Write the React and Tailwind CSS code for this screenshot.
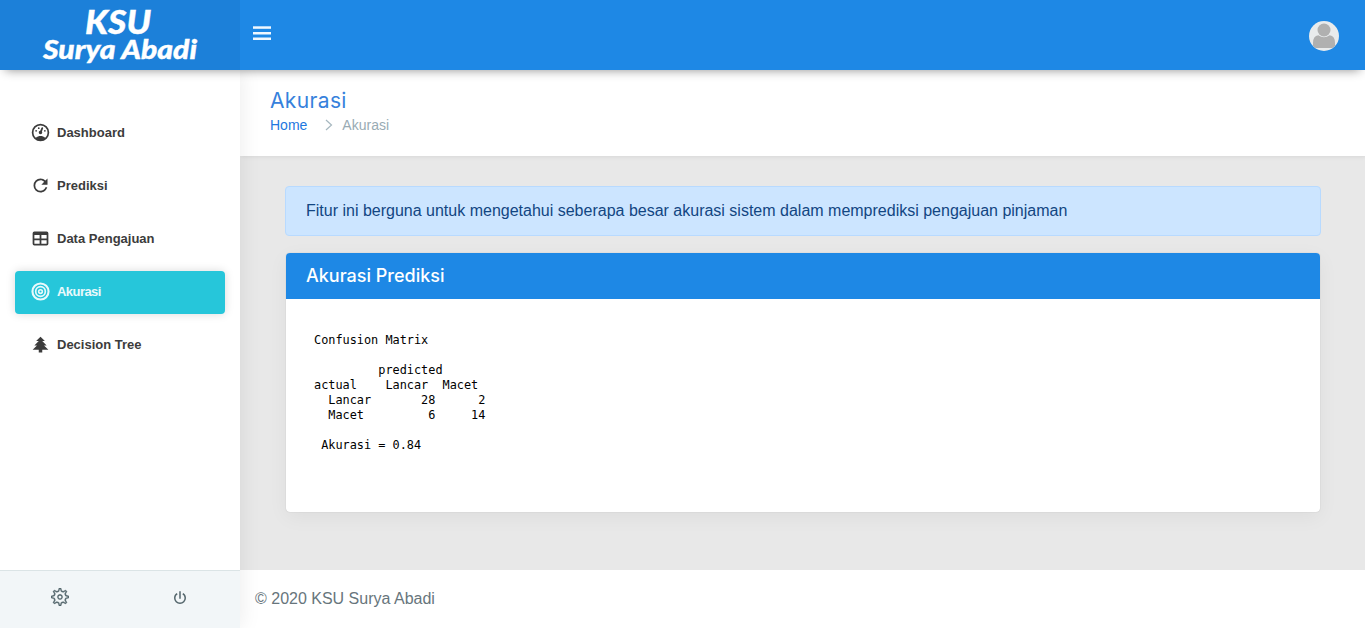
import React from "react";
import { TfiSettings } from "react-icons/tfi";

const paths = {
  gauge:
    "M17.3,18C19,16.5 20,14.4 20,12A8,8 0 0,0 12,4A8,8 0 0,0 4,12C4,14.4 5,16.5 6.7,18C8.2,16.7 10,16 12,16C14,16 15.9,16.7 17.3,18M12,2A10,10 0 0,1 22,12A10,10 0 0,1 12,22A10,10 0 0,1 2,12A10,10 0 0,1 12,2M7,9A1,1 0 0,1 8,10A1,1 0 0,1 7,11A1,1 0 0,1 6,10A1,1 0 0,1 7,9M10,6A1,1 0 0,1 11,7A1,1 0 0,1 10,8A1,1 0 0,1 9,7A1,1 0 0,1 10,6M17,9A1,1 0 0,1 18,10A1,1 0 0,1 17,11A1,1 0 0,1 16,10A1,1 0 0,1 17,9M14.4,6.1C14.9,6.3 15.1,6.9 15,7.4L13.6,10.8C13.8,11.1 14,11.5 14,12A2,2 0 0,1 12,14A2,2 0 0,1 10,12C10,11 10.7,10.1 11.7,10L13.1,6.7C13.3,6.1 13.9,5.9 14.4,6.1Z",
  refresh:
    "M17.65,6.35C16.2,4.9 14.21,4 12,4A8,8 0 0,0 4,12A8,8 0 0,0 12,20C15.73,20 18.84,17.45 19.73,14H17.65C16.83,16.33 14.61,18 12,18A6,6 0 0,1 6,12A6,6 0 0,1 12,6C13.66,6 15.14,6.69 16.22,7.78L13,11H20V4L17.65,6.35Z",
  table:
    "M5,4H19A2,2 0 0,1 21,6V18A2,2 0 0,1 19,20H5A2,2 0 0,1 3,18V6A2,2 0 0,1 5,4M5,8V12H11V8H5M13,8V12H19V8H13M5,14V18H11V14H5M13,14V18H19V14H13Z",
  tree: "M10,21V18H3L8,13H5L10,8H7L12,3L17,8H14L19,13H16L21,18H14V21H10Z",
  power:
    "M16.56,5.44L15.11,6.89C16.84,7.94 18,9.83 18,12A6,6 0 0,1 12,18A6,6 0 0,1 6,12C6,9.83 7.16,7.94 8.88,6.88L7.44,5.44C5.36,6.88 4,9.28 4,12A8,8 0 0,0 12,20A8,8 0 0,0 20,12C20,9.28 18.64,6.88 16.56,5.44M13,3H11V13H13",
};

function Icon({ name, className }) {
  if (name === "target") {
    return (
      <svg viewBox="0 0 24 24" className={className} fill="none" stroke="currentColor">
        <circle cx="12" cy="12" r="9.2" strokeWidth="2.4" />
        <circle cx="12" cy="12" r="5.5" strokeWidth="1.9" />
        <circle cx="12" cy="12" r="2.1" strokeWidth="1.8" />
      </svg>
    );
  }
  return (
    <svg viewBox="0 0 24 24" className={className} fill="currentColor">
      <path d={paths[name]} />
    </svg>
  );
}

const items = [
  { label: "Dashboard", icon: "gauge" },
  { label: "Prediksi", icon: "refresh" },
  { label: "Data Pengajuan", icon: "table" },
  { label: "Akurasi", icon: "target", active: true },
  { label: "Decision Tree", icon: "tree" },
];

const output = `Confusion Matrix

         predicted
actual    Lancar  Macet
  Lancar       28      2
  Macet         6     14

 Akurasi = 0.84`;

function Logo() {
  return (
    <svg className="h-[70px] w-60" viewBox="0 0 240 70" fill="#fff" stroke="#fff" strokeWidth="0.4" fontFamily="Lato, sans-serif" fontWeight="900" fontStyle="italic">
      <text x="85" y="33.5" fontSize="32" textLength="66" lengthAdjust="spacingAndGlyphs">KSU</text>
      <text x="43" y="59" fontSize="27" textLength="154" lengthAdjust="spacingAndGlyphs">Surya Abadi</text>
    </svg>
  );
}

function Sidebar() {
  return (
    <aside className="z-10 flex w-60 shrink-0 flex-col bg-white shadow-[1px_0_20px_rgba(0,0,0,0.08)]">
      <nav className="flex grow flex-col gap-2.5 px-[15px] pt-[42px]">
        {items.map((item) => (
          <a
            key={item.label}
            className={
              item.active
                ? "flex h-[43px] items-center rounded bg-[#26c6da] pl-[15px] text-[13px] font-bold tracking-[-0.55px] text-white/90 shadow-[0_0_10px_rgba(0,0,0,0.15)]"
                : "flex h-[43px] items-center rounded pl-[15px] text-[13px] font-bold text-[#3c3c3c]"
            }
          >
            <Icon name={item.icon} className="mb-[2px] mr-[6px] size-[21px]" />
            <span className="-mt-0.5">{item.label}</span>
          </a>
        ))}
      </nav>
      <div className="flex h-[58px] border-t border-[#dbe4e6] bg-[#f2f6f8] text-[#54666c]">
        <div className="flex w-1/2 items-center justify-center pb-[5px]">
          <TfiSettings className="size-[18px]" strokeWidth="0.3" />
        </div>
        <div className="flex w-1/2 items-center justify-center pb-[3px]">
          <Icon name="power" className="size-[18px]" />
        </div>
      </div>
    </aside>
  );
}

export default function App() {
  return (
    <div className="flex h-[628px] w-[1365px] flex-col overflow-hidden bg-[#e8e8e8] font-['Liberation_Sans',sans-serif]">
      <header className="z-20 flex h-[70px] shrink-0 bg-[#1e88e5] shadow-[0_5px_10px_-5px_rgba(0,0,0,0.45)]">
        <div className="w-60 bg-[#1c80d9]">
          <Logo />
        </div>
        <div className="flex grow items-start justify-between pl-[13px] pr-[26px]">
          <svg className="mt-[26px] h-[14px] w-[18px]" viewBox="0 0 18 14" fill="#f0f8ff">
            <rect width="18" height="2.5" y="0.3" />
            <rect width="18" height="2.5" y="6" />
            <rect width="18" height="2.5" y="11.5" />
          </svg>
          <svg className="mt-[21px] size-[30px] rounded-full" viewBox="0 0 30 30">
            <rect width="30" height="30" fill="#e9ebec" />
            <circle cx="15" cy="9" r="6.5" fill="#b0b0b0" />
            <path d="M4 25V22Q4 15 9.3 14.3Q15 18 20.7 14.3Q26 15 26 22V25Q25 27 23 27H7Q5 27 4 25Z" fill="#b0b0b0" />
          </svg>
        </div>
      </header>
      <div className="flex min-h-0 grow">
        <Sidebar />
        <main className="flex min-w-0 grow flex-col">
          <div className="h-[86px] shrink-0 bg-white pl-[30px] pt-[17px] shadow-[1px_0_5px_rgba(0,0,0,0.1)]">
            <h3 className="font-['Inter',sans-serif] text-[21px] font-normal leading-[27px] tracking-[0.35px] text-[#3681dc]">Akurasi</h3>
            <div className="mt-[2px] flex items-center text-sm leading-[18px]">
              <a className="text-[#1e78e0]">Home</a>
              <svg className="ml-[17px] mr-2 h-3 w-[10px]" viewBox="0 0 10 12" fill="none" stroke="#a6b7bf" strokeWidth="1.2">
                <path d="M2 1L7.5 6L2 11" />
              </svg>
              <span className="text-[#99abb4]">Akurasi</span>
            </div>
          </div>
          <div className="grow px-[45px] pt-[30px]">
            <div className="mr-[-1px] h-[50px] rounded border border-[#b8daff] bg-[#cce5ff] px-5 pt-3 text-base leading-6 text-[#124682]">
              Fitur ini berguna untuk mengetahui seberapa besar akurasi sistem dalam memprediksi pengajuan pinjaman
            </div>
            <section className="ml-px mt-[17px] h-[259px] overflow-hidden rounded bg-white shadow-[0_5px_20px_rgba(0,0,0,0.05),0_0_1px_rgba(0,0,0,0.25)]">
              <h4 className="h-[46px] bg-[#1e88e5] pl-5 font-['Inter',sans-serif] text-lg font-medium leading-[46px] text-white">Akurasi Prediksi</h4>
              <pre className="pl-7 pt-[34px] font-['DejaVu_Sans_Mono',monospace] text-[11.875px] leading-[15px] text-black">{output}</pre>
            </section>
          </div>
          <footer className="h-[58px] shrink-0 bg-white pl-[15px] pt-[17px] text-base leading-6 text-[#67757c]">© 2020 KSU Surya Abadi</footer>
        </main>
      </div>
    </div>
  );
}
